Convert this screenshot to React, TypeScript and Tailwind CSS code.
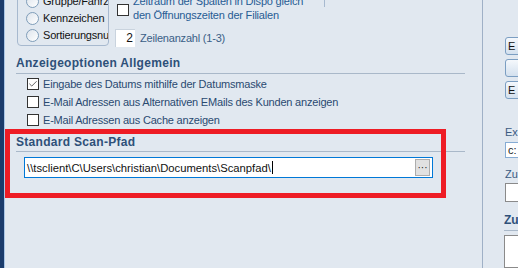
import { Check } from 'lucide-react'

const font = { fontFamily: '"Liberation Sans", Arial, sans-serif' }

function Radio({ label }: { label: string }) {
  return (
    <div className="flex h-[17px] items-center">
      <span className="h-[13px] w-[13px] shrink-0 rounded-full border border-[#7f9db9] bg-gradient-to-br from-[#dde4ec] to-white" />
      <span className="ml-[4px] whitespace-nowrap text-[11px] tracking-[-0.2px] text-[#111]">{label}</span>
    </div>
  )
}

function CheckRow({ label, checked }: { label: string; checked?: boolean }) {
  return (
    <div className="flex h-[18px] items-center pl-[22px]">
      <span className="flex h-[12px] w-[12px] shrink-0 items-center justify-center border border-[#333] bg-white">
        {checked && <Check size={10} strokeWidth={2} className="text-[#444]" />}
      </span>
      <span className="ml-[4px] whitespace-nowrap text-[11px] tracking-[-0.2px] text-[#2a4a70]">{label}</span>
    </div>
  )
}

function Heading({ text, pb }: { text: string; pb: string }) {
  return (
    <div className={`ml-[11px] w-[449px] border-b border-[#a9b8c9] ${pb}`}>
      <div className="h-[14px] text-[12px] font-bold leading-[14px] tracking-[0.3px] text-[#2e5079]">{text}</div>
    </div>
  )
}

function SideButton({ label }: { label?: string }) {
  return (
    <div className="h-[18px] w-[30px] rounded-[3px] border border-[#7b9ec2] bg-gradient-to-b from-[#f5f8fc] to-[#d3e0ee] pl-[2px] text-[11px] leading-[16px] text-[#111]">
      {label}
    </div>
  )
}

export default function App() {
  return (
    <div className="flex h-[268px] w-[518px] overflow-hidden bg-[#e1e8f0]" style={font}>
      <div className="w-[5px] shrink-0 border-r border-[#a9c6e6] bg-[#1b3c6c]" />

      <div className="relative flex w-[477px] shrink-0 flex-col">
        <div className="-mt-[16px] flex items-start">
          <div className="ml-[12px] w-[92px] shrink-0 overflow-hidden rounded-[4px] border border-[#a7b9cf] pb-[1px] pl-[8px] pt-[8px]">
            <Radio label="Gruppe/Fahrzeug" />
            <Radio label="Kennzeichen" />
            <Radio label="Sortierungsnummer" />
          </div>
          <div className="ml-[6px] w-[209px] shrink-0 pt-[10px]">
            <div className="flex items-start">
              <span className="ml-[2px] mt-[10px] h-[12px] w-[12px] shrink-0 border border-[#333] bg-white" />
              <div className="ml-[4px] text-[11px] leading-[14px] tracking-[-0.2px] text-[#275c94]">
                <div className="whitespace-nowrap">Zeitraum der Spalten in Dispo gleich</div>
                <div className="whitespace-nowrap">den Öffnungszeiten der Filialen</div>
              </div>
            </div>
            <div className="mt-[7px] flex items-center">
              <span className="h-[18px] w-[20px] shrink-0 border-l border-t border-[#c9d3de] bg-white pr-[2px] text-right text-[12px] leading-[17px] text-[#111]">
                2
              </span>
              <span className="ml-[5px] whitespace-nowrap text-[11px] tracking-[-0.2px] text-[#3a5e86]">Zeilenanzahl (1-3)</span>
            </div>
          </div>
          <div className="mt-[16px] h-[7px] w-px bg-[#a7b9cf]" />
        </div>

        <div className="mt-[9px]">
          <Heading text="Anzeigeoptionen Allgemein" pb="pb-[3px]" />
        </div>
        <div className="mt-[1px]">
          <CheckRow label="Eingabe des Datums mithilfe der Datumsmaske" checked />
          <CheckRow label="E-Mail Adressen aus Alternativen EMails des Kunden anzeigen" />
          <CheckRow label="E-Mail Adressen aus Cache anzeigen" />
        </div>

        <div className="mt-[6px]">
          <Heading text="Standard Scan-Pfad" pb="pb-[2px]" />
        </div>
        <div className="ml-[19px] mt-[5px] flex h-[21px] w-[409px] items-center border border-[#0078d7] bg-white pl-[2px] pr-[2px]">
          <span className="flex-1 whitespace-nowrap text-[11.25px] text-[#111]">
            \\tsclient\C\Users\christian\Documents\Scanpfad\
            <span className="ml-px inline-block h-[13px] w-px translate-y-[2px] bg-black" />
          </span>
          <span className="flex h-[17px] w-[15px] items-center justify-center border border-[#adadad] bg-[#e1e1e1] text-[10px] leading-none text-[#222]">
            ···
          </span>
        </div>

        <div className="pointer-events-none absolute left-0 top-[129px] h-[69px] w-[441px] border-[5px] border-[#ee1c25]" />
      </div>

      <div className="w-px shrink-0 bg-[#9fb0c6]" />

      <div className="flex flex-1 flex-col pl-[22px]">
        <div className="mt-[37px] flex flex-col gap-[4px]">
          <SideButton label="E" />
          <SideButton />
          <SideButton label="E" />
        </div>
        <div className="mt-[26px] h-[14px] whitespace-nowrap text-[11px] leading-[14px] text-[#3b5b82]">Ex</div>
        <div className="mt-[3px] h-[16px] w-[30px] border border-[#86acd4] bg-white pl-[2px] text-[11px] leading-[14px] text-[#222]">
          c:
        </div>
        <div className="mt-[9px] h-[14px] whitespace-nowrap text-[11px] leading-[14px] text-[#3b5b82]">Zu</div>
        <div className="mt-[2px] h-[22px] w-[30px] border border-[#8a8a8a] bg-white" />
        <div className="-ml-[1px] mt-[11px] border-b border-[#a9b8c9] pb-[3px]">
          <div className="h-[14px] text-[12px] font-bold leading-[14px] text-[#2e5079]">Zu</div>
        </div>
        <div className="-ml-[1px] mt-[4px] h-[40px] w-[31px] border border-[#8a8a8a] bg-white" />
      </div>
    </div>
  )
}
